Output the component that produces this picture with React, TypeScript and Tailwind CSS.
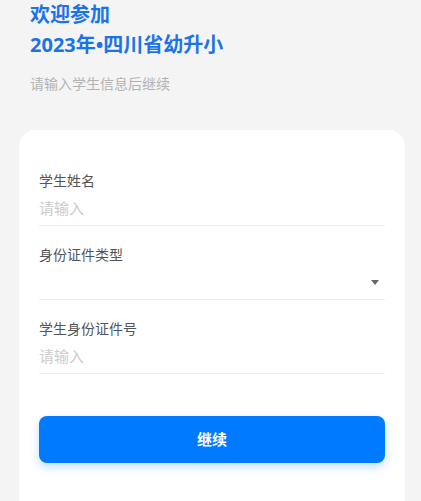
export default function App() {
  const fields = [
    { label: '学生姓名', placeholder: '请输入', select: false },
    { label: '身份证件类型', placeholder: '', select: true },
    { label: '学生身份证件号', placeholder: '请输入', select: false },
  ]

  return (
    <div
      className="min-h-[501px] overflow-hidden bg-[#f4f4f4]"
      style={{ fontFamily: '"Noto Sans", "Noto Sans CJK SC", sans-serif' }}
    >
      {/* Header */}
      <div className="pl-[30px]">
        <h1 className="text-[20px] leading-[30px] font-bold text-[#1a73e8]">
          欢迎参加
          <br />
          2023年•四川省幼升小
        </h1>
        <p className="mt-[14px] text-[14px] leading-5 text-[#b3b3b3]">请输入学生信息后继续</p>
      </div>

      {/* Form card */}
      <div className="mt-[36px] ml-[19px] w-[386px] rounded-2xl bg-white px-5 pt-[22px] pb-[60px]">
        {fields.map((f) => (
          <div key={f.label} className="pt-[19px] border-b border-[#eeeeee]">
            <div className="text-[14px] leading-5 text-[#555555]">{f.label}</div>
            <div className="flex h-[34px] items-center justify-between">
              <span className="text-[15px] text-[#cccccc]">{f.placeholder}</span>
              {f.select && (
                <span className="mr-[6px] h-0 w-0 border-x-[4px] border-t-[5px] border-x-transparent border-t-[#666666]" />
              )}
            </div>
          </div>
        ))}

        <button className="mt-[42px] flex h-[47px] w-full items-center justify-center rounded-lg bg-[#007aff] text-[15px] font-bold text-white shadow-[0_4px_10px_rgba(0,122,255,0.25)]">
          继续
        </button>
      </div>
    </div>
  )
}
